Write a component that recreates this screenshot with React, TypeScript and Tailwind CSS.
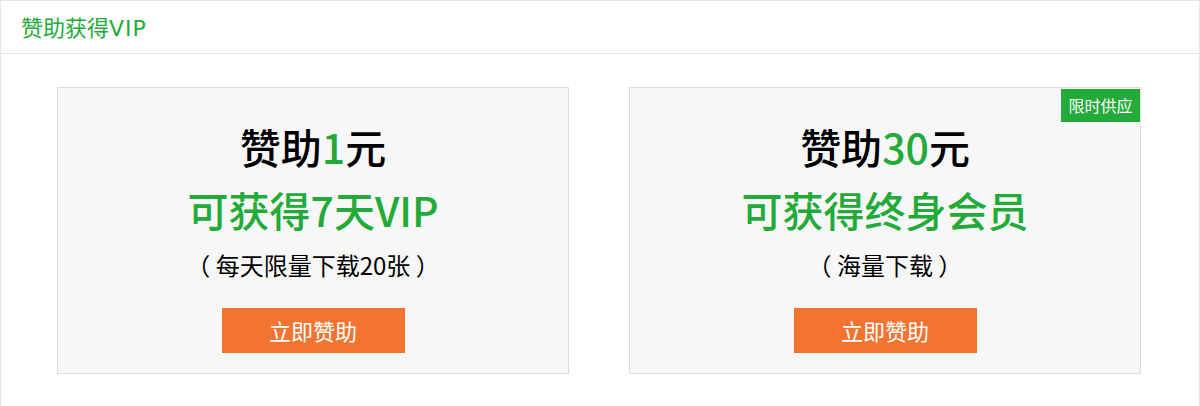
import React from 'react';

const plans = [
  { amount: '1', benefit: '可获得7天VIP', note: '（ 每天限量下载20张 ）', badge: '' },
  { amount: '30', benefit: '可获得终身会员', note: '（ 海量下载 ）', badge: '限时供应' },
];

export default function App() {
  return (
    <div
      className="w-[1200px] h-[406px] bg-white border border-b-0 border-[#e5e5e5] text-black"
      style={{ fontFamily: '"Noto Sans CJK SC", "Noto Sans", sans-serif' }}
    >
      {/* Header */}
      <div className="h-[53px] border-b border-[#e5e5e5] pl-[20px] flex items-center">
        <h2 className="text-[22px] leading-[22px] text-[#22ab38] pt-[1px]">
          赞助获得<span className="font-['DejaVu_Sans'] tracking-[1px]">VIP</span>
        </h2>
      </div>

      {/* Cards */}
      <div className="flex gap-[60px] pl-[56px] pt-[33px]">
        {plans.map((plan) => (
          <div
            key={plan.amount}
            className="relative w-[512px] h-[287px] bg-[#f7f7f7] border border-[#dcdcdc] flex flex-col items-center pt-[38px]"
          >
            {plan.badge && (
              <span className="absolute top-[1px] right-0 w-[79px] h-[33px] bg-[#22ab38] text-white text-[16px] leading-[33px] text-center">
                {plan.badge}
              </span>
            )}
            <div className="text-[41px] leading-[40px] font-medium">
              赞助<span className="text-[#22ab38]">{plan.amount}</span>元
            </div>
            <div className="mt-[21px] text-[41px] leading-[44px] font-medium text-[#22ab38]">
              {plan.benefit}
            </div>
            <div className="mt-[22px] text-[24px] leading-[24px]">{plan.note}</div>
            <button className="mt-[31px] w-[183px] h-[45px] bg-[#f37430] text-white text-[22px] leading-[45px]">
              立即赞助
            </button>
          </div>
        ))}
      </div>
    </div>
  );
}
